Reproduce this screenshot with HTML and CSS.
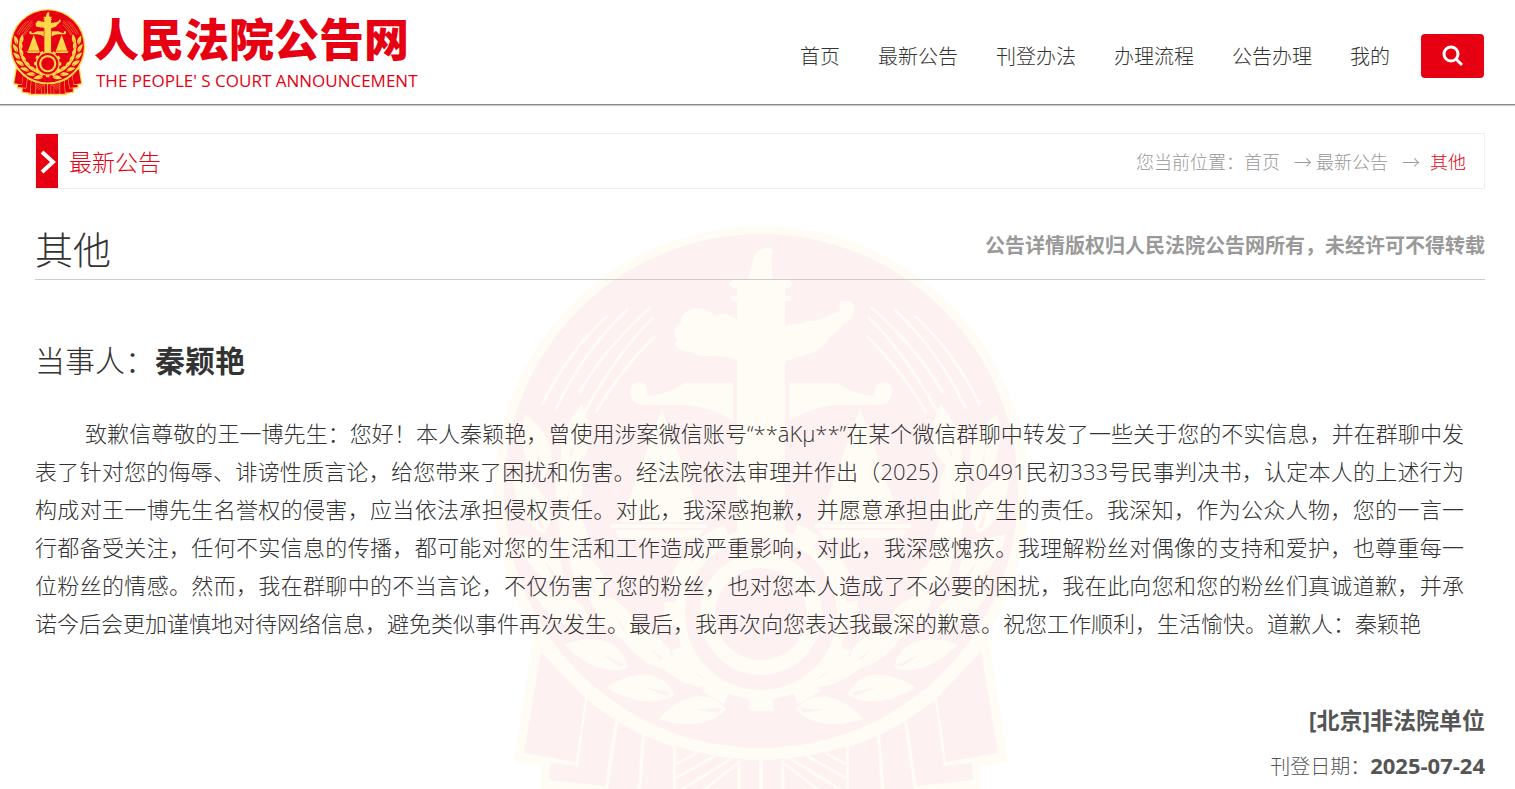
FILE: index.html
```html
<!DOCTYPE html>
<html lang="zh-CN">
	<head>
		<meta charset="utf-8">
		<title>人民法院公告网</title>
		<link rel="stylesheet" href="styles.css">
	</head>
	<body>
		<!-- court emblem, used by the logo and the watermark -->
		<svg class="defs" width="0" height="0" aria-hidden="true">
			<defs>
				<path id="leaf" d="M0 0C-6 -10 -16 -17 -28 -17C-44 -17 -58 -8 -68 0C-44 12 -16 14 0 0ZM-4 -2L-30 -4L-8 2Z" fill-rule="evenodd"/>
				<g id="pair">
					<use href="#leaf" transform="translate(256 486) rotate(-14)"/>
					<use href="#leaf" transform="translate(246 462) rotate(14)"/>
				</g>
				<g id="half">
					<!-- ribbon -->
					<path class="gold" d="M42 400L21 536L48 540V564L80 568V596L130 602V612H268V400Z"/>
					<path class="red" d="M48 426L31 527L83 536L92 472Z"/>
					<path class="red" d="M94 474L85 540L57 537L56 554L112 560L122 494Z"/>
					<path class="red" d="M125 496L115 565L90 563V588L142 594L149 509Z"/>
					<path class="red" d="M152 510L146 596V602H180V521Z"/>
					<path class="red" d="M183 521V602H266V533Z"/>
					<path class="line" d="M183 538L204 527M183 552L222 530M183 567L238 533M198 574L244 538M224 562V602M246 534V602"/>
				</g>
				<g id="inner">
					<!-- wheat -->
					<path class="line" d="M49 179C66 144 88 114 114 90M63 183C82 142 106 110 135 83M86 167C106 132 130 106 158 81M89 191C110 152 132 118 161 91M103 186C120 156 140 132 162 110"/>
					<g class="gold">
						<use href="#pair" transform="rotate(6 268 266)"/>
						<use href="#pair" transform="rotate(20 268 266)"/>
						<use href="#pair" transform="rotate(34 268 266)"/>
						<use href="#pair" transform="rotate(48 268 266)"/>
						<use href="#pair" transform="rotate(62 268 266)"/>
						<use href="#pair" transform="rotate(76 268 266)"/>
						<use href="#pair" transform="rotate(90 268 266)"/>
					</g>
					<!-- scale -->
					<g class="gold">
						<path d="M240 157H191C180 166 166 169 154 170C156 160 150 155 144 156C137 157 136 164 138 171C141 178 147 179 152 179H195Q222 183 240 195Z"/>
						<path d="M169 182L128 296H210Z"/>
						<path d="M118 298H214V302H118ZM122 304H210L206 312H126Z"/>
					</g>
				</g>
				<symbol id="emblem" viewBox="0 0 540 617">
					<use href="#half"/>
					<use href="#half" transform="translate(536) scale(-1 1)"/>
					<circle class="gold" cx="268" cy="267" r="267"/>
					<circle class="red" cx="268" cy="265" r="257"/>
					<use href="#inner"/>
					<use href="#inner" transform="translate(536) scale(-1 1)"/>
					<!-- column -->
					<path class="gold" d="M255 54L260 34C262 25 270 20 280 23L278 34L280 54H296Q302 58 296 62H292V70H298V75H292V100C300 96 310 100 316 94C326 98 334 88 346 86C352 82 340 78 350 75C366 72 364 94 350 98C344 108 336 110 332 118C322 130 306 128 292 136V340H244V134C224 126 206 134 198 126C190 126 178 122 184 114C180 110 180 102 188 96C188 80 214 78 222 90C230 86 238 88 244 94V75H238V70H244V62H240Q232 58 240 54Z"/>
					<!-- gear -->
					<circle class="red" cx="268" cy="388" r="84"/>
					<circle class="teeth" cx="268" cy="388" r="90"/>
					<circle class="gold" cx="268" cy="388" r="86"/>
					<circle class="red" cx="268" cy="388" r="76"/>
					<circle class="gold" cx="268" cy="388" r="61"/>
					<circle class="red" cx="268" cy="388" r="46"/>
				</symbol>
			</defs>
		</svg>

		<header id="header">
			<a class="logo" href="#">
				<svg class="logo-emblem" aria-hidden="true"><use href="#emblem"/></svg>
				<span class="logo-text">
					<strong>人民法院公告网</strong>
					<span class="logo-en">THE PEOPLE' S COURT ANNOUNCEMENT</span>
				</span>
			</a>
			<nav class="nav">
				<a href="#">首页</a>
				<a href="#">最新公告</a>
				<a href="#">刊登办法</a>
				<a href="#">办理流程</a>
				<a href="#">公告办理</a>
				<a href="#">我的</a>
			</nav>
			<button class="search" type="button" aria-label="搜索">
				<svg width="22" height="22" viewBox="0 0 22 22" aria-hidden="true">
					<circle cx="9" cy="9" r="7"/>
					<path d="M14 14L20 20"/>
				</svg>
			</button>
		</header>

		<main id="content">
			<div class="bar">
				<span class="bar-arrow">
					<svg width="16" height="24" viewBox="0 0 16 24" aria-hidden="true"><path d="M2 2L13 12L2 22"/></svg>
				</span>
				<h2>最新公告</h2>
				<div class="crumbs">
					<span>您当前位置：</span><a href="#">首页</a>
					<span class="sep">→</span><a href="#">最新公告</a>
					<span class="sep last">→</span><a class="current" href="#">其他</a>
				</div>
			</div>

			<article class="notice">
				<svg class="watermark" aria-hidden="true"><use href="#emblem"/></svg>
				<div class="notice-head">
					<h1>其他</h1>
					<strong>公告详情版权归人民法院公告网所有，未经许可不得转载</strong>
				</div>
				<p class="party">当事人：<strong>秦颖艳</strong></p>
				<p class="text">致歉信尊敬的王一博先生：您好！本人秦颖艳，曾使用涉案微信账号“**āKμ**”在某个微信群聊中转发了一些关于您的不实信息，并在群聊中发表了针对您的侮辱、诽谤性质言论，给您带来了困扰和伤害。经法院依法审理并作出（2025）京0491民初333号民事判决书，认定本人的上述行为构成对王一博先生名誉权的侵害，应当依法承担侵权责任。对此，我深感抱歉，并愿意承担由此产生的责任。我深知，作为公众人物，您的一言一行都备受关注，任何不实信息的传播，都可能对您的生活和工作造成严重影响，对此，我深感愧疚。我理解粉丝对偶像的支持和爱护，也尊重每一位粉丝的情感。然而，我在群聊中的不当言论，不仅伤害了您的粉丝，也对您本人造成了不必要的困扰，我在此向您和您的粉丝们真诚道歉，并承诺今后会更加谨慎地对待网络信息，避免类似事件再次发生。最后，我再次向您表达我最深的歉意。祝您工作顺利，生活愉快。道歉人：秦颖艳</p>
				<div class="sign">
					<strong>[北京]非法院单位</strong>
					<p>刊登日期：<b>2025-07-24</b></p>
				</div>
			</article>
		</main>
	</body>
</html>
```

FILE: styles.css
```css
:root {
	--red: #e60012;
	--gold: #ffd84a;
	--font-color: #333;
}
* {
	box-sizing: border-box;
	margin: 0;
	padding: 0;
}
body {
	color: var(--font-color);
	background: #fff;
	font-family: "Open Sans", "Noto Sans CJK SC", sans-serif;
	font-size: 20px;
	font-weight: 300;
	text-spacing-trim: space-all;
}
a {
	color: inherit;
	text-decoration: none;
}
.defs {
	position: absolute;
}
.gold {
	fill: var(--gold);
}
.red {
	fill: var(--red);
}
.line {
	fill: none;
	stroke: var(--gold);
	stroke-width: 3;
}
.teeth {
	fill: none;
	stroke: var(--gold);
	stroke-width: 14;
	stroke-dasharray: 24 23;
	stroke-dashoffset: 12;
}
#header {
	display: flex;
	align-items: center;
	height: 105px;
	padding: 0 31px 0 10px;
	border-bottom: 1px solid #888;
	box-shadow: 0 1px 1px #ccc;
}
.logo {
	display: flex;
	align-items: center;
	gap: 8px;
	color: var(--red);
}
.logo-emblem {
	width: 76px;
	height: 87px;
}
.logo-text {
	display: flex;
	flex-direction: column;
	gap: 8px;
	padding-top: 4px;
}
.logo-text strong {
	font-size: 45px;
	font-weight: 900;
	line-height: 46px;
}
.logo-en {
	padding-left: 2px;
	font-size: 17px;
	font-weight: 500;
	line-height: 20px;
	white-space: nowrap;
}
.nav {
	display: flex;
	gap: 38px;
	margin-left: auto;
	padding-top: 10px;
}
.nav a {
	line-height: 30px;
}
.search {
	display: flex;
	align-items: center;
	justify-content: center;
	width: 63px;
	height: 44px;
	margin: 8px 0 0 31px;
	background: var(--red);
	border: 0;
	border-radius: 4px;
	cursor: pointer;
}
.search svg {
	fill: none;
	stroke: #fff;
	stroke-width: 3;
}
#content {
	padding: 28px 30px 0 35px;
}
.bar {
	display: flex;
	align-items: center;
	height: 56px;
	padding-right: 18px;
	border: 1px solid #eee;
}
.bar-arrow {
	display: flex;
	align-items: center;
	justify-content: center;
	width: 22px;
	height: 54px;
	padding: 2px 0 0 2px;
	background: var(--red);
}
.bar-arrow svg {
	fill: none;
	stroke: #fff;
	stroke-width: 4;
}
.bar h2 {
	margin-left: 11px;
	color: var(--red);
	font-size: 23px;
	font-weight: 300;
}
.crumbs {
	display: flex;
	align-items: center;
	margin-left: auto;
	color: #999;
	font-size: 18px;
}
.sep {
	margin: 0 4px 0 14px;
}
.sep.last {
	margin-right: 10px;
}
.current {
	color: var(--red);
}
.notice {
	position: relative;
	height: calc(100vh - 189px);
	min-height: 600px;
	overflow: hidden;
}
.watermark {
	position: absolute;
	top: 37px;
	left: 50%;
	z-index: -1;
	width: 540px;
	height: 617px;
	margin-left: -267px;
	opacity: 0.05;
}
.notice-head {
	display: flex;
	align-items: center;
	justify-content: space-between;
	height: 91px;
	padding-top: 20px;
	border-bottom: 1px solid #ccc;
}
.notice-head h1 {
	padding-top: 6px;
	font-size: 38px;
	font-weight: 300;
}
.notice-head strong {
	color: #999;
	font-weight: 700;
}
.party {
	margin-top: 60px;
	font-size: 30px;
	line-height: 42px;
}
.party strong {
	font-weight: 700;
}
.text {
	margin-top: 32px;
	padding-right: 21px;
	font-size: 22px;
	line-height: 38px;
	text-align: justify;
	text-indent: 50px;
}
.sign {
	margin-top: 58px;
	color: #555;
	text-align: right;
}
.sign strong {
	font-size: 23px;
	font-weight: 700;
	line-height: 40px;
}
.sign p {
	margin-top: 10px;
	line-height: 30px;
}
.sign b {
	font-size: 22px;
	font-weight: 700;
}
```
